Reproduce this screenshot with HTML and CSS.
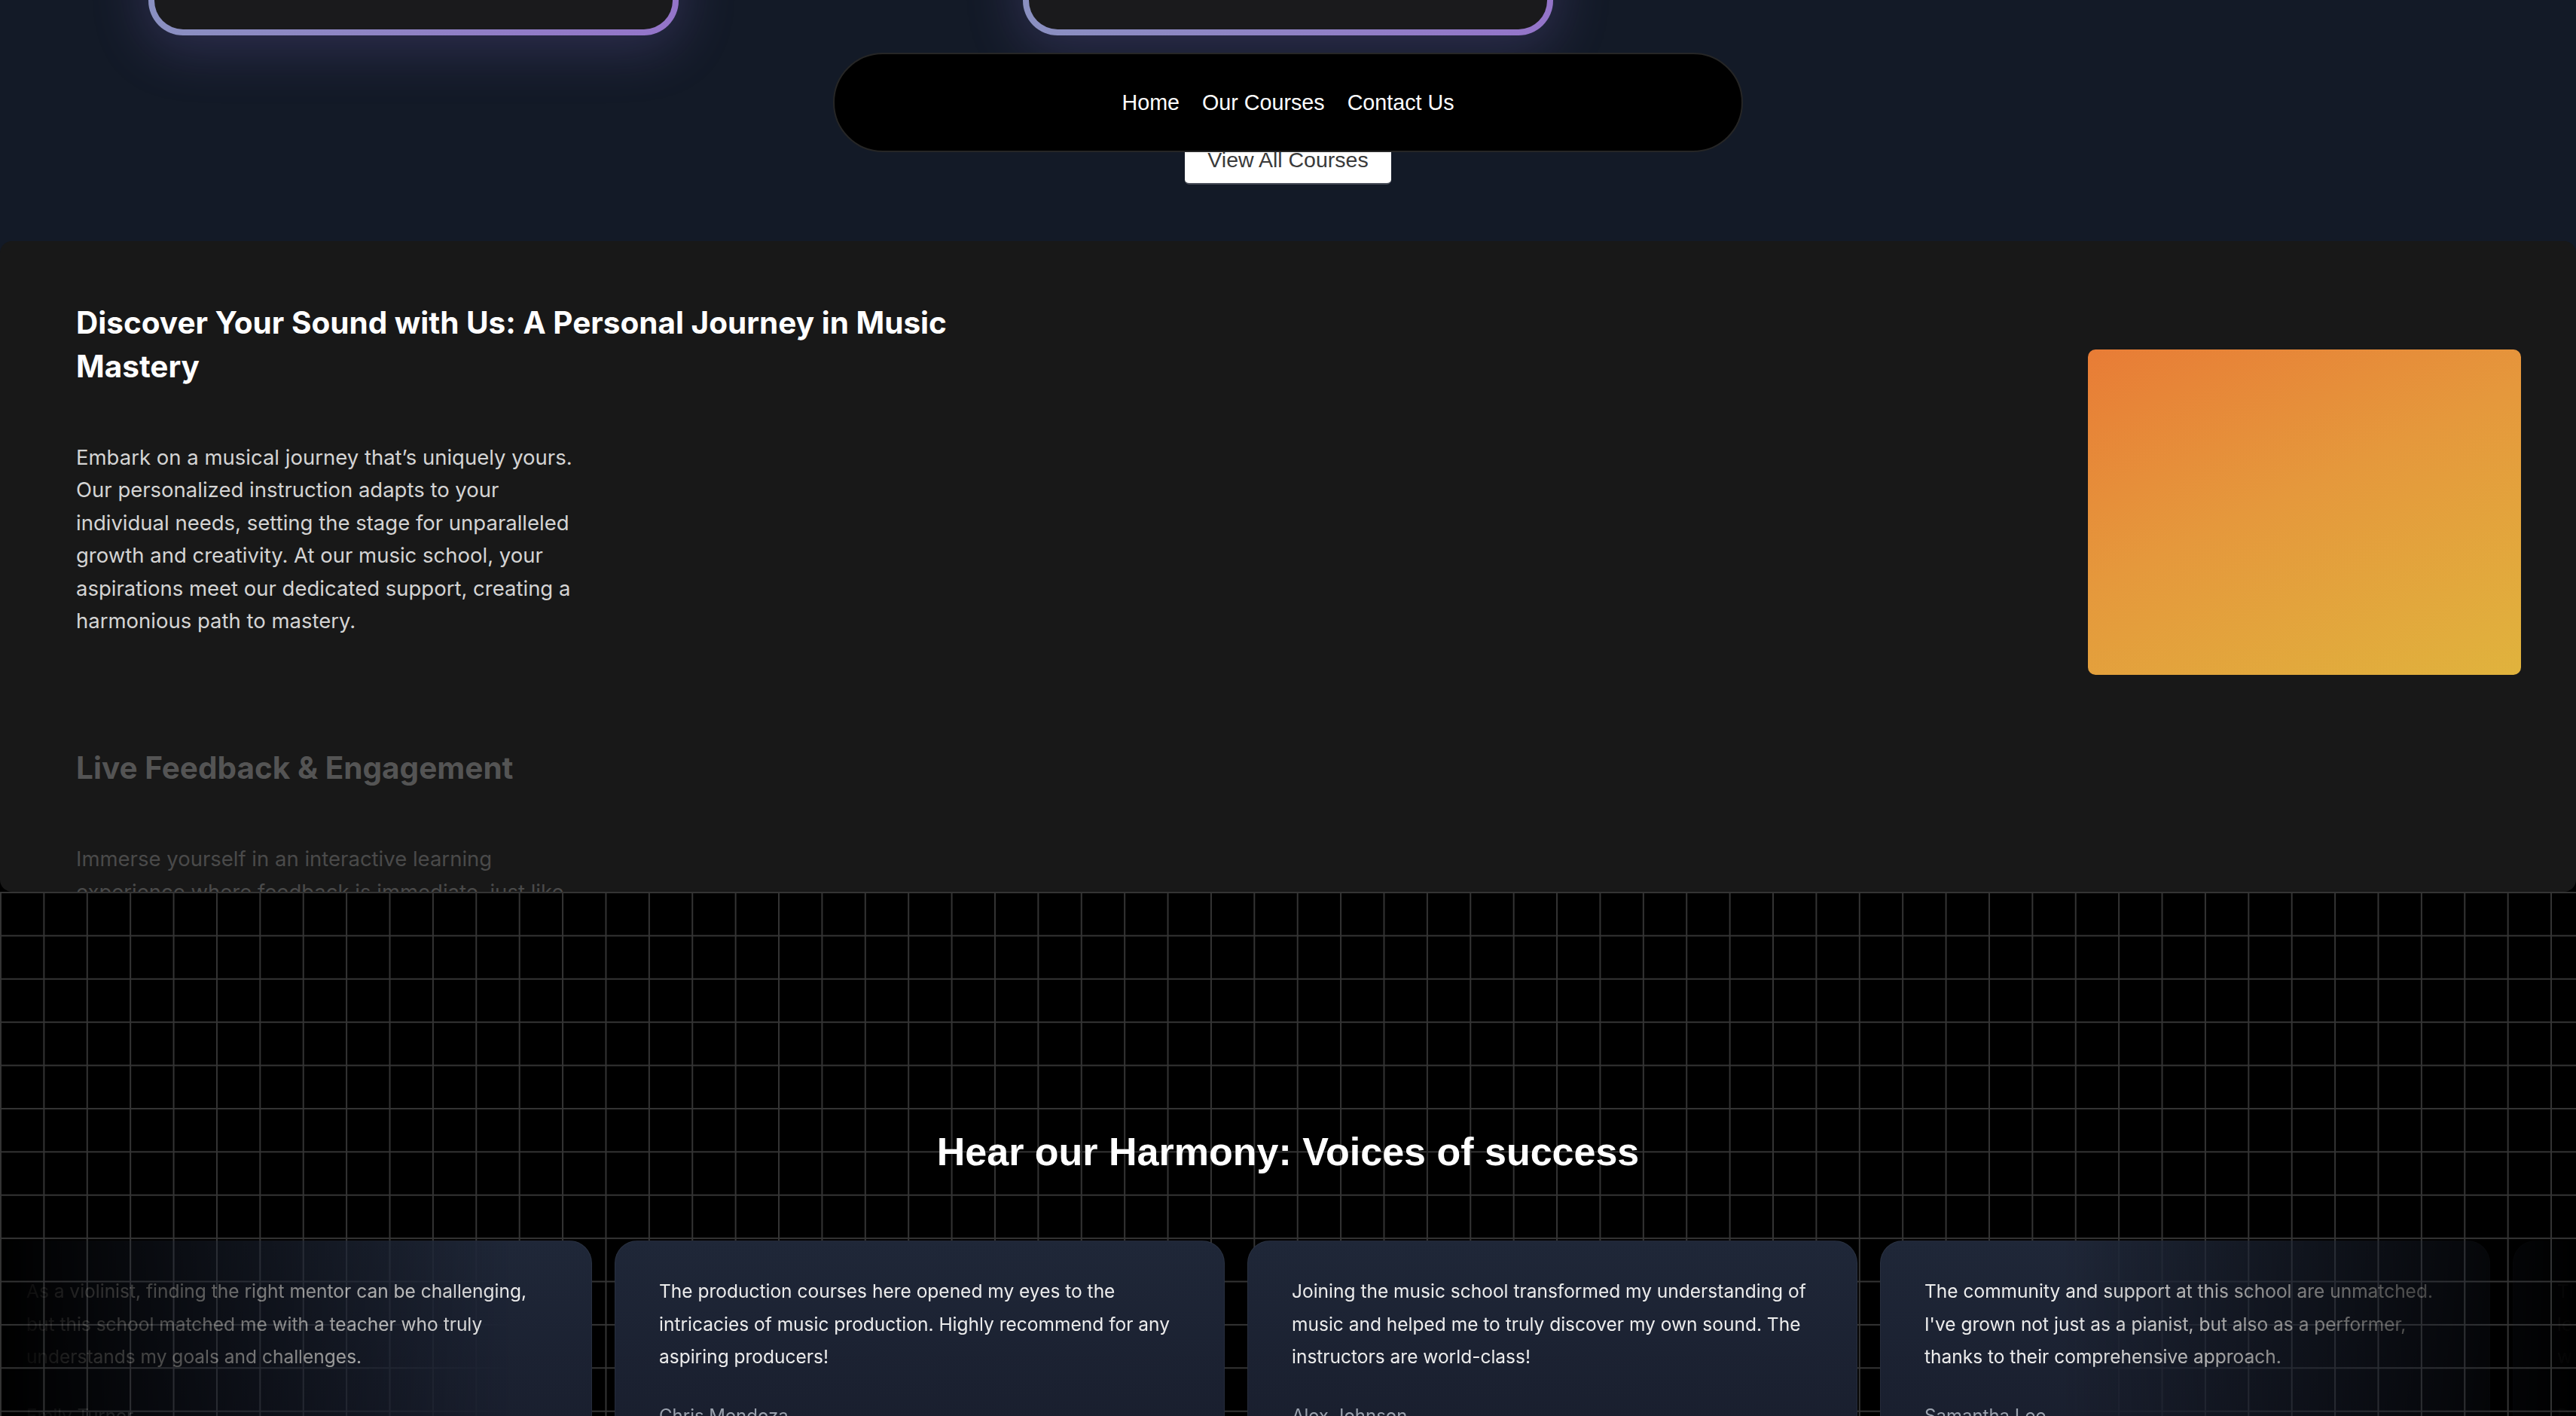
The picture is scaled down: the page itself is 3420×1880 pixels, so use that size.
FILE: index.html
```html
<!DOCTYPE html>
<html lang="en">
<head>
<meta charset="utf-8">
<title>Music School</title>
<link rel="stylesheet" href="styles.css">
</head>
<body>
<header class="hero">
  <div class="course-row">
    <div class="course-card"></div>
    <div class="course-card"></div>
    <div class="course-card course-card--hidden"></div>
  </div>
  <div class="hero-actions">
    <a class="btn-light" href="#">View All Courses</a>
  </div>
  <nav class="nav-pill">
    <a href="#">Home</a>
    <a href="#">Our Courses</a>
    <a href="#">Contact Us</a>
  </nav>
</header>

<div class="mid-wrap">
  <section class="journey">
    <div class="journey-text">
      <div class="journey-block">
        <h2 class="journey-title">Discover Your Sound with Us: A Personal Journey in Music Mastery</h2>
        <p class="journey-copy">Embark on a musical journey that’s uniquely yours. Our personalized instruction adapts to your individual needs, setting the stage for unparalleled growth and creativity. At our music school, your aspirations meet our dedicated support, creating a harmonious path to mastery.</p>
      </div>
      <div class="journey-block journey-block--faded">
        <h2 class="journey-title">Live Feedback &amp; Engagement</h2>
        <p class="journey-copy">Immerse yourself in an interactive learning experience where feedback is immediate, just like having a mentor right beside you.</p>
      </div>
    </div>
    <div class="journey-visual"></div>
  </section>
</div>

<section class="voices">
  <h2 class="voices-title">Hear our Harmony: Voices of success</h2>
  <div class="marquee">
    <div class="marquee-track">
      <article class="quote-card">
        <p class="quote-text">As a violinist, finding the right mentor can be challenging, but this school matched me with a teacher who truly understands my goals and challenges.</p>
        <p class="quote-name">Emily Turner</p>
      </article>
      <article class="quote-card">
        <p class="quote-text">The production courses here opened my eyes to the intricacies of music production. Highly recommend for any aspiring producers!</p>
        <p class="quote-name">Chris Mendoza</p>
      </article>
      <article class="quote-card">
        <p class="quote-text">Joining the music school transformed my understanding of music and helped me to truly discover my own sound. The instructors are world-class!</p>
        <p class="quote-name">Alex Johnson</p>
      </article>
      <article class="quote-card">
        <p class="quote-text">The community and support at this school are unmatched. I've grown not just as a pianist, but also as a performer, thanks to their comprehensive approach.</p>
        <p class="quote-name">Samantha Lee</p>
      </article>
      <article class="quote-card">
        <p class="quote-text">The flexible lesson schedule made it possible to keep learning guitar while working full time. I couldn't be happier with my progress.</p>
        <p class="quote-name">Daniel Brooks</p>
      </article>
    </div>
  </div>
</section>
</body>
</html>
```

FILE: styles.css
```css
* { box-sizing: border-box; }

html, body {
  margin: 0;
  padding: 0;
}

body {
  background: #000;
  font-family: "Inter", "Noto Sans", sans-serif;
  color: #fff;
  overflow-x: hidden;
}

a { text-decoration: none; }

/* ---------- hero bottom ---------- */
.hero {
  position: relative;
  display: flow-root;
  height: 320px;
  background: #131a27;
}

.course-row {
  display: grid;
  grid-template-columns: repeat(3, 704px);
  column-gap: 457px;
  justify-content: center;
  margin-top: -313px;
}

.course-card {
  height: 360px;
  border: 8px solid transparent;
  border-radius: 46px;
  background:
    linear-gradient(#1a1a1c, #1a1a1c) padding-box,
    linear-gradient(90deg, #8a90c1, #9474c9) border-box;
  box-shadow: 0 14px 70px 6px rgba(140, 120, 220, 0.22);
}

.course-card--hidden { opacity: 0; }

.hero-actions {
  display: flex;
  justify-content: center;
  margin-top: 134px;
}

.btn-light {
  display: inline-block;
  background: #fff;
  color: #3a3a3a;
  font-family: "Liberation Sans", Arial, sans-serif;
  font-size: 28.5px;
  line-height: 34px;
  padding: 14px 30px;
  border-radius: 6px;
  border-bottom: 2px solid #4a4f5a;
}

.nav-pill {
  position: absolute;
  top: 70px;
  left: 50%;
  transform: translateX(-50%);
  width: 1208px;
  height: 132px;
  display: flex;
  align-items: center;
  justify-content: center;
  gap: 30px;
  background: #000;
  border: 2px solid #262626;
  border-radius: 999px;
  font-family: "Liberation Sans", Arial, sans-serif;
  font-size: 28.7px;
}

.nav-pill a { color: #fff; }

/* ---------- journey ---------- */
.mid-wrap {
  background: linear-gradient(#131a27 50%, #000 50%);
}

.journey {
  height: 864px;
  overflow: hidden;
  background: #181818;
  border-radius: 16px;
  display: flex;
  justify-content: space-between;
  align-items: flex-start;
  padding: 80px 73px 0 101px;
}

.journey-text {
  width: 1240px;
  display: flex;
  flex-direction: column;
  gap: 145px;
}

.journey-title {
  margin: 0;
  font-size: 40.5px;
  line-height: 58px;
  font-weight: 700;
  color: #fff;
}

.journey-copy {
  margin: 70px 0 0;
  max-width: 680px;
  font-size: 27.5px;
  line-height: 43.4px;
  color: #d4d4d4;
}

.journey-block--faded .journey-title { color: #545454; }
.journey-block--faded .journey-copy { color: #4a4a4a; }

.journey-visual {
  flex: none;
  width: 575px;
  height: 432px;
  margin-top: 64px;
  border-radius: 10px;
  background: linear-gradient(155deg, #e87c36 0%, #e5983c 45%, #e0b33d 100%);
}

/* ---------- voices ---------- */
.voices {
  background-color: #000;
  background-image:
    linear-gradient(to right, #343434 1.5px, transparent 1.5px),
    linear-gradient(to bottom, #343434 1.5px, transparent 1.5px);
  background-size: 57.4px 57.4px;
  padding-top: 315px;
  padding-bottom: 120px;
}

.voices-title {
  margin: 0;
  text-align: center;
  font-family: "Liberation Sans", Arial, sans-serif;
  font-weight: 700;
  font-size: 52px;
  line-height: 60px;
  color: #fff;
}

.marquee {
  margin-top: 88px;
  overflow: hidden;
  -webkit-mask-image: linear-gradient(to right, transparent 0%, #000 20%, #000 80%, transparent 100%);
  mask-image: linear-gradient(to right, transparent 0%, #000 20%, #000 80%, transparent 100%);
}

.marquee-track {
  display: flex;
  gap: 30px;
  margin-left: -24px;
  width: max-content;
}

.quote-card {
  flex: none;
  width: 810px;
  padding: 45px 58px 48px;
  border-radius: 30px;
  background: linear-gradient(180deg, #1f2738 0%, #181d2c 100%);
  border: 1px solid rgba(255, 255, 255, 0.05);
}

.quote-text {
  margin: 0;
  font-size: 24.5px;
  line-height: 43.6px;
  color: #ececec;
}

.quote-name {
  margin: 38px 0 0;
  font-size: 24px;
  line-height: 36px;
  color: #9aa1ad;
}
```
